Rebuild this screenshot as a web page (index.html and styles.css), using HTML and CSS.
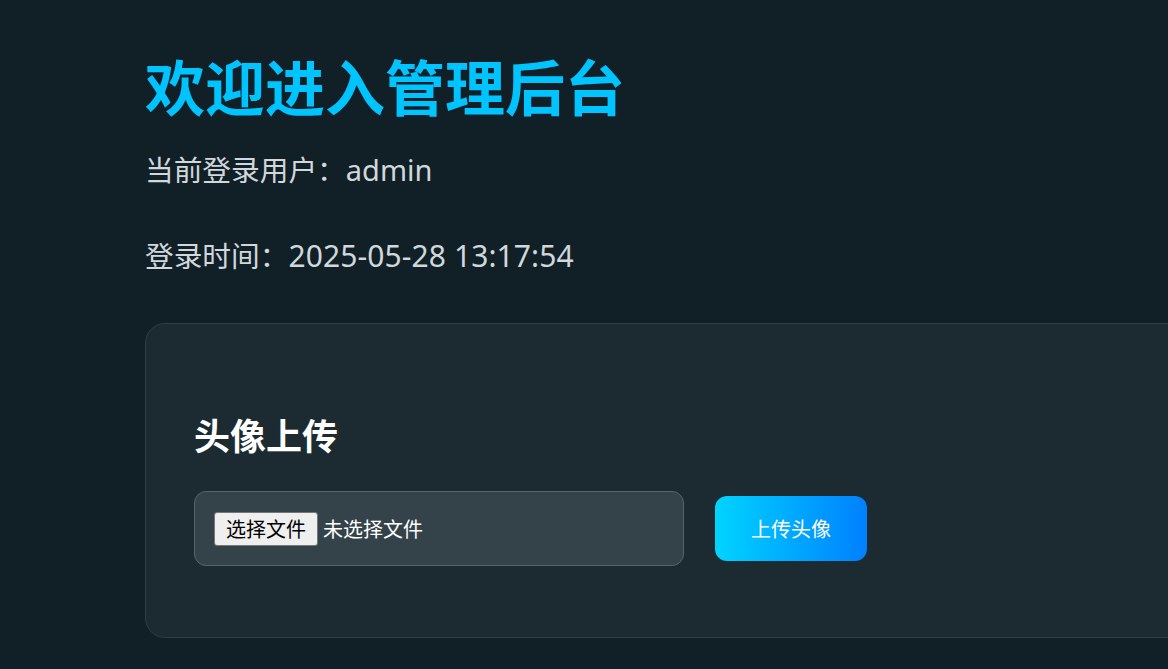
FILE: index.html
```html
<!DOCTYPE html>
<html lang="zh-CN">
<head>
<meta charset="utf-8">
<title>管理后台</title>
<link rel="stylesheet" href="styles.css">
</head>
<body>
<main class="page">
  <h1 class="title">欢迎进入管理后台</h1>
  <p class="info">当前登录用户：<span class="user-value">admin</span></p>
  <p class="info info-time">登录时间：<span class="time-value">2025-05-28 13:17:54</span></p>
  <section class="card">
    <h2 class="card-title">头像上传</h2>
    <form class="upload-form">
      <label class="file-box">
        <span class="file-btn">选择文件</span>
        <span class="file-name">未选择文件</span>
      </label>
      <button type="button" class="upload-btn">上传头像</button>
    </form>
  </section>
</main>
</body>
</html>
```

FILE: styles.css
```css
html, body {
  margin: 0;
  padding: 0;
  overflow: hidden;
}
body {
  background: #111f27;
  font-family: "Noto Sans", "Noto Sans CJK SC", sans-serif;
  color: #d0d8dc;
  min-height: 669px;
}
.page {
  padding: 49px 0 0 145px;
}
.title {
  margin: 0;
  font-size: 60px;
  line-height: 72px;
  font-weight: 700;
  color: #00c4ff;
  font-family: "Noto Sans CJK SC", sans-serif;
}
.info {
  margin: 29px 0 0;
  font-size: 28.7px;
  line-height: 40px;
  color: #d0d8dc;
}
.user-value {
  font-size: 29px;
}
.time-value {
  font-size: 30px;
  letter-spacing: 0.1px;
}
.info-time {
  margin-top: 46px;
}
.card {
  margin-top: 47px;
  width: 1200px;
  box-sizing: border-box;
  background: #1c2a31;
  border: 1px solid #2f3d45;
  border-radius: 20px;
  padding: 86px 48px 71px;
}
.card-title {
  margin: 0;
  font-size: 36px;
  line-height: 48px;
  font-weight: 700;
  color: #ffffff;
  font-family: "Noto Sans CJK SC", sans-serif;
}
.upload-form {
  margin-top: 33px;
  display: flex;
  align-items: center;
  gap: 31px;
}
.file-box {
  display: flex;
  align-items: center;
  gap: 5px;
  width: 490px;
  height: 75px;
  box-sizing: border-box;
  padding: 0 19px;
  background: #344249;
  border: 1px solid #56646b;
  border-radius: 12px;
  font-size: 20px;
}
.file-btn {
  display: inline-flex;
  align-items: center;
  justify-content: center;
  width: 104px;
  height: 34px;
  box-sizing: border-box;
  background: #efefef;
  border: 1px solid #767676;
  border-radius: 3px;
  color: #000;
  font-size: 20px;
  font-family: "Noto Sans CJK SC", sans-serif;
}
.file-name {
  color: #ffffff;
  font-family: "Noto Sans CJK SC", sans-serif;
}
.upload-btn {
  width: 152px;
  height: 65px;
  border: none;
  border-radius: 12px;
  background: linear-gradient(90deg, #00d4ff 0%, #0080ff 100%);
  color: #ffffff;
  font-size: 20px;
  font-family: "Noto Sans CJK SC", sans-serif;
  padding: 0;
}
```
